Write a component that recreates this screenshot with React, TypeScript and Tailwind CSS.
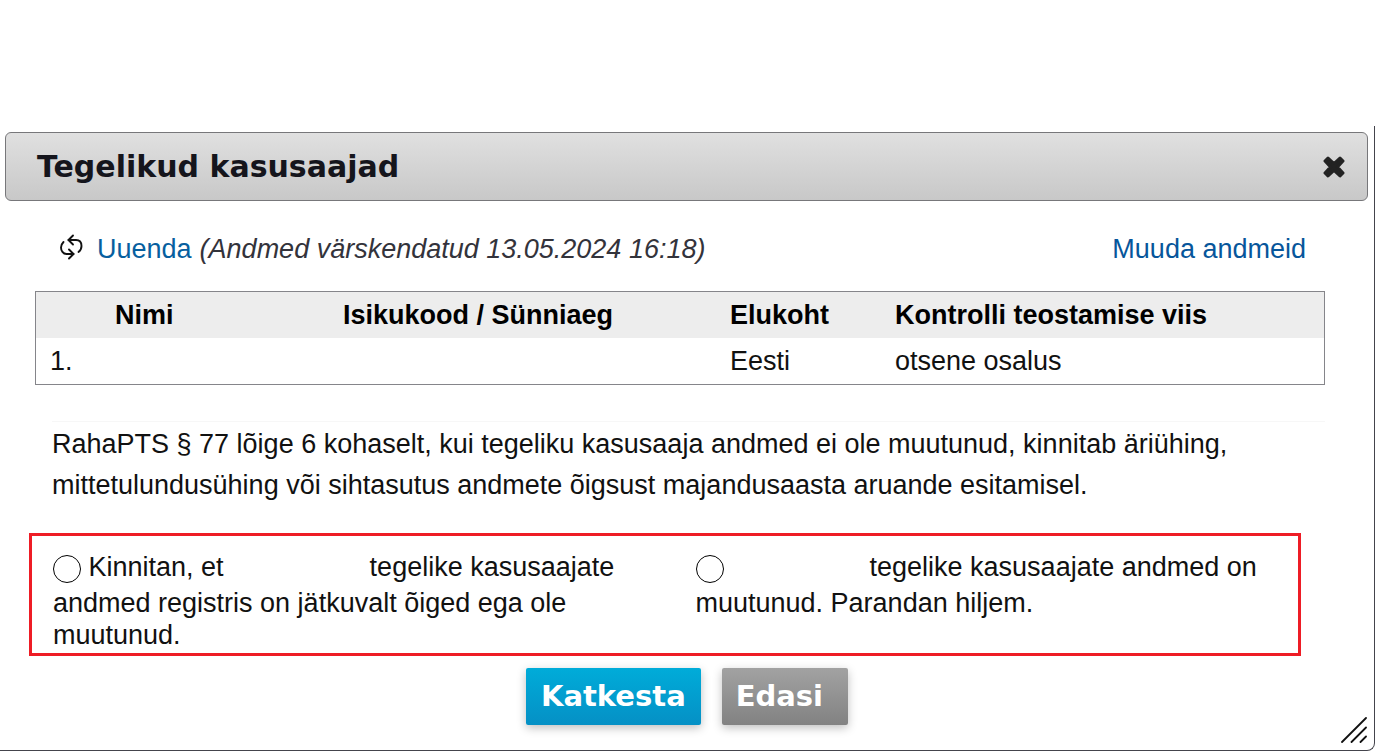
const owners = [
  { id: 1, name: "", code: "", residence: "Eesti", control: "otsene osalus" },
];

function RefreshIcon() {
  return (
    <svg
      className="mb-1 h-[27px] w-6 shrink-0"
      viewBox="0 0 24 27"
      fill="none"
      stroke="#111"
      strokeWidth="1.9"
      strokeLinecap="round"
      strokeLinejoin="round"
      aria-hidden="true"
    >
      <path d="M14 1.5 L9.5 6 L14 10.5" />
      <path d="M9.5 6 H17 C20.5 6 22.5 8.5 22.5 12 C22.5 14.5 21.500 16.500 19.500 18" />
      <path d="M10 15.500 L14.500 20 L10 24.500" />
      <path d="M14.500 20 H7.500 C4 20 2 16.500 2 13.500 C2 11 3 9.500 4.500 8" />
    </svg>
  );
}

function CloseIcon() {
  return (
    <svg className="h-[22px] w-[22px]" viewBox="0 0 22 22" aria-hidden="true">
      <path
        d="M5 2 L11 7.500 L17 2 L20 5 L14.500 11 L20 17 L17 20 L11 14.500 L5 20 L2 17 L7.500 11 L2 5 Z"
        fill="#232323"
        stroke="#232323"
        strokeWidth="3"
        strokeLinejoin="round"
      />
    </svg>
  );
}

// Blank space where the company name goes
function CompanyName() {
  return <span className="inline-block w-[131px]" />;
}

const radioClass =
  "mb-1 inline-block h-7 w-7 appearance-none rounded-full border border-black bg-white align-[-11px] checked:border-[9px]";

export default function App() {
  return (
    <div className="bg-white pt-[126px] pr-1 font-['Liberation_Sans',Arial,sans-serif] text-[27px] text-[#111]">
      <section
        role="dialog"
        aria-labelledby="dialog-title"
        className="relative rounded-br-lg border-r border-b border-[#44444c] pt-1.5 pb-[25px]"
      >
        <header className="mr-1.5 ml-[5px] flex h-[69px] items-center justify-between rounded-md border border-[#77777a] bg-linear-to-b from-[#e0e0e0] to-[#c8c8c8] pr-[22px] pl-[31px]">
          <h2
            id="dialog-title"
            className="font-['DejaVu_Sans',Verdana,sans-serif] text-[30px] leading-9 font-bold text-[#15151c]"
          >
            Tegelikud kasusaajad
          </h2>
          <button type="button" aria-label="Sulge">
            <CloseIcon />
          </button>
        </header>

        <div className="mt-[30px] mr-[68px] ml-[59px] flex items-center justify-between leading-9">
          <div className="flex items-center">
            <RefreshIcon />
            <a href="#" className="ml-3.5 text-[#075f9f]">
              Uuenda
            </a>
            <em className="ml-2 text-[#33333b]">
              (Andmed värskendatud 13.05.2024 16:18)
            </em>
          </div>
          <a href="#" className="text-[#07569b]">
            Muuda andmeid
          </a>
        </div>

        <div className="mt-6 mr-[49px] ml-[35px] border border-[#85858a]">
          <table className="w-full table-fixed text-left leading-[46px]">
            <thead className="bg-[#ededed] text-black">
              <tr>
                <th className="w-[79px]" />
                <th className="w-[228px]">Nimi</th>
                <th className="w-[387px]">Isikukood / Sünniaeg</th>
                <th className="w-[165px]">Elukoht</th>
                <th>Kontrolli teostamise viis</th>
              </tr>
            </thead>
            <tbody>
              {owners.map((owner) => (
                <tr key={owner.id}>
                  <td className="pl-3.5">{owner.id}.</td>
                  <td>{owner.name}</td>
                  <td>{owner.code}</td>
                  <td>{owner.residence}</td>
                  <td>{owner.control}</td>
                </tr>
              ))}
            </tbody>
          </table>
        </div>

        <p className="mt-9 mr-[49px] ml-[52px] border-t border-[#f7f7f7] pt-0.5 leading-[41px]">
          RahaPTS § 77 lõige 6 kohaselt, kui tegeliku kasusaaja andmed ei ole
          muutunud, kinnitab äriühing, mittetulundusühing või sihtasutus andmete
          õigsust majandusaasta aruande esitamisel.
        </p>

        <fieldset className="mt-[27px] mr-[73px] ml-[29px] grid grid-cols-2 gap-x-2 border-[3px] border-[#ee1c25] pt-[15px] pr-2 pb-0.5 pl-[21px] leading-8">
          <label className="block pr-8">
            <input type="radio" name="decision" className={radioClass} />{" "}
            Kinnitan, et <CompanyName /> tegelike kasusaajate andmed registris
            on jätkuvalt õiged ega ole muutunud.
          </label>
          <label className="block pl-5">
            <input type="radio" name="decision" className={radioClass} />{" "}
            <CompanyName /> tegelike kasusaajate andmed on muutunud. Parandan
            hiljem.
          </label>
        </fieldset>

        <div className="mt-3 flex justify-center gap-[21px] font-['DejaVu_Sans',Verdana,sans-serif] text-[29px] leading-[57px] font-bold text-white">
          <button
            type="button"
            className="rounded-xs bg-linear-to-b from-[#00acd9] to-[#0590c5] px-[15px] shadow-[0_3px_10px_rgba(0,0,0,0.25)]"
          >
            Katkesta
          </button>
          <button
            type="button"
            className="rounded-xs bg-linear-to-b from-[#a2a2a2] to-[#828282] pr-[25px] pl-3.5 shadow-[0_3px_10px_rgba(0,0,0,0.25)]"
          >
            Edasi
          </button>
        </div>

        <svg
          className="absolute right-1.5 bottom-[7px] h-[26px] w-[27px]"
          viewBox="0 0 27 26"
          stroke="#111"
          strokeWidth="1.8"
          strokeLinecap="round"
          aria-hidden="true"
        >
          <path d="M1 25 L25 1 M10.500 25 L25 10.500 M19.500 25 L25 19.500" />
        </svg>
      </section>
    </div>
  );
}
